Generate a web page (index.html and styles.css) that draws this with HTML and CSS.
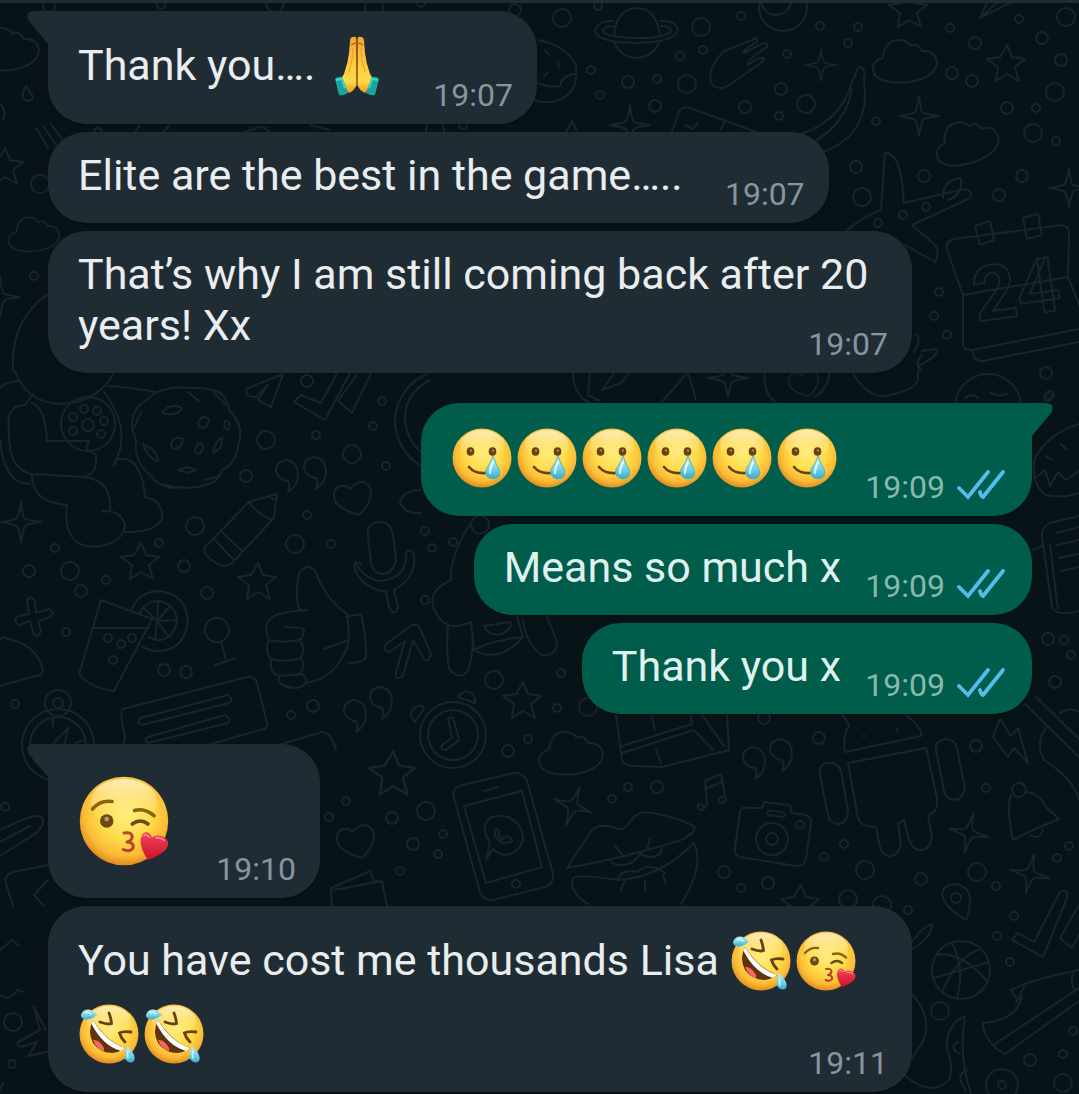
FILE: index.html
```
<!DOCTYPE html>
<html lang="en">
<head>
    <meta charset="UTF-8">
    <meta name="viewport" content="width=device-width, initial-scale=1.0">
    <title>Chat</title>
    <link rel="stylesheet" href="styles.css">
</head>
<body>
    <!-- Shared icons -->
    <svg class="sprite" aria-hidden="true">
        <defs>
            <radialGradient id="skin" cx="0.52" cy="0.42" r="0.6">
                <stop offset="0" stop-color="#ffee80"/>
                <stop offset="0.5" stop-color="#fedb48"/>
                <stop offset="0.78" stop-color="#fcbc36"/>
                <stop offset="1" stop-color="#dd841c"/>
            </radialGradient>
            <linearGradient id="shine" x1="0" y1="0" x2="0" y2="1">
                <stop offset="0" stop-color="#fdeecb" stop-opacity="0.9"/>
                <stop offset="1" stop-color="#ffe673" stop-opacity="0"/>
            </linearGradient>
            <linearGradient id="drop" x1="0" y1="0" x2="0" y2="1">
                <stop offset="0" stop-color="#b9eef2"/>
                <stop offset="0.6" stop-color="#6fd0e6"/>
                <stop offset="1" stop-color="#35a9cf"/>
            </linearGradient>
            <linearGradient id="love" x1="0" y1="0" x2="0" y2="1">
                <stop offset="0" stop-color="#f4465a"/>
                <stop offset="1" stop-color="#cb1029"/>
            </linearGradient>
            <linearGradient id="hand" x1="0" y1="0" x2="0" y2="1">
                <stop offset="0" stop-color="#f3a336"/>
                <stop offset="0.45" stop-color="#ffc93c"/>
                <stop offset="0.8" stop-color="#ffd84a"/>
                <stop offset="1" stop-color="#f0941f"/>
            </linearGradient>
        </defs>
        <symbol id="face" viewBox="0 0 60 60">
            <circle cx="30" cy="30" r="29.5" fill="url(#skin)"/>
            <ellipse cx="30" cy="17" rx="22" ry="15" fill="url(#shine)"/>
        </symbol>
        <symbol id="tear" viewBox="0 0 60 60">
            <use href="#face"/>
            <ellipse cx="18.500" cy="23.500" rx="3.800" ry="4.300" fill="#69400f"/>
            <ellipse cx="40.500" cy="23.500" rx="3.800" ry="4.300" fill="#69400f"/>
            <circle cx="19" cy="22.500" r="1.200" fill="#a9834f"/>
            <circle cx="41" cy="22.500" r="1.200" fill="#a9834f"/>
            <path d="M17 39Q23 46 34 45" fill="none" stroke="#69400f" stroke-width="2.600" stroke-linecap="round"/>
            <path d="M41 28Q44 36 47 41Q50 50 41 51Q32 50 34 41Q39 35 41 28Z" fill="url(#drop)" stroke="#4fa8b8" stroke-width="0.800"/>
            <path d="M41 34Q38 41 38 45" fill="none" stroke="#e8fbfd" stroke-width="2" stroke-linecap="round"/>
        </symbol>
        <symbol id="kiss" viewBox="0 0 60 60">
            <use href="#face"/>
            <path d="M9 22Q14 16 22 17" fill="none" stroke="#8a6310" stroke-width="2.400" stroke-linecap="round"/>
            <path d="M37 23Q44 21 50 26.500" fill="none" stroke="#8a6310" stroke-width="2.400" stroke-linecap="round"/>
            <circle cx="18.500" cy="30" r="4.500" fill="#6b4a13"/>
            <circle cx="18.500" cy="28.700" r="1.600" fill="#b39a74"/>
            <path d="M35.500 32Q41 28 46 32" fill="none" stroke="#6b4a13" stroke-width="2.400" stroke-linecap="round"/>
            <path d="M30 38Q35 37 35.500 40.500Q35 43.500 32 44Q37 44.500 36 48Q34 51 29.500 49" fill="none" stroke="#b5442a" stroke-width="2" stroke-linecap="round" stroke-linejoin="round"/>
            <path d="M48.500 41Q51 39 55 40Q62 43 58 49Q54 53 46 56Q41 49 41 43Q42 37 45 37.500Q48 38 48.500 41Z" fill="url(#love)"/>
            <path d="M43 40Q45 38 47 41M51 41.500Q54 40.500 57 43" fill="none" stroke="#ff9aa4" stroke-width="1"/>
        </symbol>
        <symbol id="rofl" viewBox="0 0 60 60">
            <use href="#face"/>
            <path d="M21 18Q29 21 32.500 19.500Q32 14 30 9" fill="none" stroke="#69400f" stroke-width="2.800" stroke-linecap="round"/>
            <path d="M52 28Q44 27 40.500 29Q42 34 46 38" fill="none" stroke="#69400f" stroke-width="2.800" stroke-linecap="round"/>
            <path d="M14 16Q8 28 14 39Q21 49 34 49Q41 48 46 44Q27 37 14 16Z" fill="#64310d"/>
            <path d="M14 16Q26 37 46 44L42 47Q24 42 12.500 20Z" fill="#fff"/>
            <path d="M14 36Q20 35 25 44L25 47.500Q17 44.500 14 36Z" fill="#ee6a63"/>
            <path d="M18 11Q12 4 6 6Q0 10 3 14Q9 18 18 11Z" fill="url(#drop)"/>
            <path d="M48 42Q45 50 46 55Q51 61 55 57Q58 51 48 42Z" fill="url(#drop)"/>
            <path d="M6 9Q9 7 12 10M49 47Q48 51 49 54" fill="none" stroke="#d8f6fa" stroke-width="1.400" stroke-linecap="round"/>
        </symbol>
        <symbol id="pray" viewBox="0 0 60 60">
            <path d="M29 1Q23 0 23 5L22 17Q21 27 17 38L12 46L22 57Q28 54 29.500 49Z" fill="url(#hand)"/>
            <path d="M31 1Q37 0 37 5L38 17Q39 27 43 38L48 46L38 57Q32 54 30.500 49Z" fill="url(#hand)"/>
            <path d="M30 2V50M24 9Q30 5 36 9" fill="none" stroke="#b36f12" stroke-width="1.300"/>
            <path d="M26 12Q26 24 22 36M34 12Q34 24 38 36" fill="none" stroke="#e9a127" stroke-width="1"/>
            <path d="M8 43Q10 40 15 41Q19 50 21 57Q16 60 12 59Z" fill="#16a79a"/>
            <path d="M52 43Q50 40 45 41Q41 50 39 57Q44 60 48 59Z" fill="#16a79a"/>
            <path d="M9 44L15 43L18 52M51 44L45 43L42 52" fill="none" stroke="#45d3c4" stroke-width="2"/>
        </symbol>
        <symbol id="ticks" viewBox="0 0 48 30">
            <path d="M2 18L11 27L31 2M23 22Q24 27 26 27L46 2" fill="none" stroke="#53bdeb" stroke-width="3.800" stroke-linecap="round" stroke-linejoin="miter"/>
        </symbol>
    </svg>

    <!-- Doodle wallpaper -->
    <svg class="wallpaper" viewBox="0 0 1079 1094" preserveAspectRatio="xMinYMin slice" aria-hidden="true">
        <defs>
            <marker id="ringS" markerUnits="userSpaceOnUse" markerWidth="12" markerHeight="12" refX="6" refY="6"><circle cx="6" cy="6" r="4"/></marker>
            <marker id="ringM" markerUnits="userSpaceOnUse" markerWidth="18" markerHeight="18" refX="9" refY="9"><circle cx="9" cy="9" r="6"/></marker>
            <marker id="ringL" markerUnits="userSpaceOnUse" markerWidth="24" markerHeight="24" refX="12" refY="12"><circle cx="12" cy="12" r="9"/></marker>
            <path id="star" d="M1 -19L6 -7L19 -5L9 3L13 17L1 10L-10 17L-8 3L-19 -5L-6 -7Z"/>
            <path id="sparkle" d="M0 -20Q2 -3 4 -3Q12 -1 20 0Q5 2 4 4Q2 8 0 20Q-2 6 -4 4Q-8 2 -20 0Q-5 -2 -4 -4Q-2 -7 0 -20Z"/>
            <path id="cloud" d="M-22 -4Q-20 -22 -6 -22Q2 -22 6 -16Q12 -20 17 -11Q30 -12 32 0Q31 12 16 17Q0 23 -20 19Q-33 15 -32 5Q-30 -3 -22 -4Z"/>
            <path id="heart" d="M-2 -9Q3 -17 12 -16Q20 -12 19 -3Q17 8 7 17Q-8 13 -16 5Q-21 -6 -14 -11Q-7 -14 -2 -9Z"/>
            <path id="quote" d="M1 5Q-8 4 -11 -4Q-12 -14 -1 -16Q10 -15 11 -2Q11 10 1 16Q4 10 1 5Z"/>
        </defs>

        <polyline class="small" points="598,6 741,16 703,50 680,56 591,70 657,79 600,95 787,54 820,26 858,27 848,43 779,116 950,28 1019,19 1036,108 1056,141 876,121 926,207 903,215 878,223 939,292 934,316 947,335 1050,395 84,409 97,411 73,417 104,421 73,431 101,434 316,435 382,401 373,426 386,466 331,544 307,515 55,548 106,580 159,543 66,632 15,704 291,715 425,531 561,673 557,708 528,739 628,787 612,799 346,801 329,817 443,834 438,854 400,871 986,788 844,844 824,857 741,888 996,886 1057,858 1069,846 908,910 1014,916 997,936 1010,962 1073,1031 1063,1054 1002,1085 34,276 98,132 161,5 421,3 463,125 5,807 108,638 121,644 132,638 113,660 432,548 453,542 425,600 1048,397 1064,640 1071,655 12,1064"/>
        <polyline class="medium" points="628,82 655,106 781,89 745,107 975,43 1042,38 1061,60 952,73 972,81 1007,108 856,167 924,176 1022,176 999,195 1046,373 88,425 307,381 246,476 29,571 81,591 184,566 207,593 164,670 186,672 313,706 508,751 657,787 392,818 413,844 764,718 819,738 976,746 724,872 921,879 1030,1060 49,6 515,10 1048,639 1055,682 768,883"/>
        <polyline class="large" points="562,18 701,27 687,84 806,104 1066,17 1055,92 1033,133 862,197 266,440 352,454 195,526 295,544 70,571 494,680 588,707 426,811 865,870 977,872 848,899 882,905 940,1011 1063,1083 40,184 275,3 374,8 435,130 13,1022 480,525"/>

        <use href="#star" x="1006" y="64"/>
        <use href="#star" x="908" y="10"/>
        <use href="#star" x="140" y="562"/>
        <use href="#star" x="257" y="582"/>
        <use href="#star" x="522" y="701"/>
        <use href="#star" transform="translate(392 774) scale(1.200)"/>
        <use href="#star" x="800" y="904"/>
        <use href="#star" x="4" y="167"/>
        <use href="#sparkle" transform="translate(821 65) scale(0.800)"/>
        <use href="#sparkle" x="919" y="116"/>
        <use href="#sparkle" x="1069" y="188"/>
        <use href="#sparkle" x="630" y="125"/>
        <use href="#sparkle" x="21" y="522"/>
        <use href="#sparkle" transform="translate(573 806) rotate(20)"/>
        <use href="#sparkle" transform="translate(969 833) rotate(12)"/>
        <use href="#sparkle" transform="translate(1030 874) rotate(12)"/>
        <use href="#sparkle" x="728" y="378"/>
        <use href="#sparkle" x="0" y="297"/>
        <use href="#cloud" x="905" y="62"/>
        <use href="#cloud" transform="translate(967 143) rotate(-12)"/>
        <use href="#cloud" x="571" y="754"/>
        <use href="#cloud" x="7" y="50"/>
        <use href="#cloud" transform="translate(34 235) scale(0.800)"/>
        <use href="#heart" x="352" y="498"/>
        <use href="#heart" x="355" y="841"/>
        <use href="#heart" transform="translate(803 383) scale(0.800)"/>
        <use href="#quote" x="287" y="476"/>
        <use href="#quote" x="315" y="473"/>
        <use href="#quote" x="355" y="716"/>
        <use href="#quote" x="381" y="703"/>
        <use href="#quote" x="754" y="763"/>
        <use href="#quote" x="781" y="755"/>

        <!-- planet, glove, donuts, banana -->
        <path d="M614 36Q616 9 637 8Q657 9 660 36M614 43Q622 58 637 58Q652 57 659 43M613 21Q597 21 595 31Q598 43 637 43Q676 42 678 30Q676 20 660 21M614 26Q603 26 603 32Q612 38 637 38Q665 38 671 31Q670 26 661 26"/>
        <path d="M757 38L724 51Q707 68 711 83Q719 94 735 81L762 62Q768 56 757 59L748 65Q746 60 767 47Q769 40 757 46L744 53Q741 51 757 42Z"/>
        <path d="M538 40Q565 45 576 65Q580 94 555 101Q543 104 535 100M575 74Q562 75 560 86Q550 88 538 83M545 50L549 55M558 62L559 68M548 72L544 76"/>
        <circle cx="783" cy="7" r="24"/>
        <circle cx="776" cy="0" r="15"/>
        <path d="M860 67Q866 68 864 82Q871 132 826 151Q800 152 790 146M858 68L852 82Q840 126 790 137M852 89Q846 123 815 141"/>
        <path d="M671 134L679 112Q682 106 690 108L756 132M685 125L693 129L698 122M725 120L721 129"/>
        <path d="M565 134L572 121L578 134M980 18L1000 0M980 18L988 0M980 18L1015 0"/>

        <!-- plane, calendar, cup, face -->
        <path d="M885 153Q900 152 903 192L904 203L964 189Q976 192 968 199L912 225L934 244Q941 252 935 262L905 245M885 153L881 210Q862 217 845 232M943 198Q942 180 961 178Q963 195 948 200"/>
        <path d="M963 295L947 250Q945 241 954 239L1062 225Q1069 226 1069 234L1068 277L963 295V343Q963 351 972 350L1079 329M973 351Q973 362 983 361L1079 342M1068 277L1085 320"/>
        <path d="M975 226L990 221L994 240L980 245ZM1023 218L1038 214L1042 235L1027 239Z"/>
        <text x="974" y="317" transform="rotate(-8 1010 300)">24</text>
        <path d="M852 372Q868 398 885 396Q914 391 918 380Q917 373 920 365Q940 355 936 349L922 351M916 334Q922 340 914 352M922 370Q913 366 922 355"/>
        <circle cx="988" cy="407" r="33"/>
        <path d="M965 398Q972 392 978 398M990 393Q999 397 1007 394M971 408Q986 424 1002 405"/>
        <path d="M573 373Q573 395 590 403M590 373L588 395L600 401M615 372L602 390L621 383L630 372M660 404L688 372L696 400M765 372Q762 394 778 404M830 372Q827 390 815 397"/>
        <path d="M1079 424Q1048 434 1035 458Q1030 484 1046 495Q1063 499 1079 493M1036 477L1045 470L1050 486L1058 472L1066 480L1079 471M1046 456L1052 460M1061 444L1066 449"/>

        <!-- baby with rattle, cookie -->
        <path d="M15 371Q26 403 62 404Q98 402 114 373M20 381Q4 382 0 388M33 394L25 405Q5 405 9 431Q8 470 32 474L83 477Q98 474 96 455L86 448L89 441L47 441Q45 405 31 403"/>
        <path d="M0 440Q4 484 30 484M32 474Q32 503 67 505M67 504Q62 546 94 547Q124 544 125 524Q120 510 102 511M83 477Q112 479 110 511M104 392Q133 430 114 465M108 386Q135 388 155 392M115 460Q141 452 145 497Q164 501 162 519Q154 533 125 532"/>
        <circle cx="88" cy="424" r="27"/>
        <path d="M155 393Q170 386 190 388Q205 387 221 393Q229 402 229 410Q242 423 240 438L236 455Q231 466 222 470Q217 484 205 485Q193 489 180 487Q168 490 157 482L143 468Q134 456 136 441L132 428Q131 410 144 402Z"/>
        <path d="M162 413Q169 402 182 408Q178 417 162 413ZM198 424Q201 413 209 419Q208 430 200 427ZM171 445Q173 435 183 439Q181 451 172 448ZM195 450Q199 438 203 446Q202 456 196 453ZM178 470L187 467L196 470L187 473ZM143 444Q158 450 158 461Q148 459 143 444ZM213 453Q215 440 222 438Q223 449 213 453ZM225 421Q232 421 229 430Q222 428 225 421ZM204 480L220 476M162 484L178 488M188 392L199 401M213 392L226 405M141 412L134 428"/>

        <!-- checks, watch, pencil, mic -->
        <path d="M283 374L246 389Q246 398 256 397L268 385L258 400L271 407L283 374M337 373L321 403L301 395L294 402L325 420L350 373M358 373L338 401L352 413L371 373"/>
        <path d="M430 372Q394 389 395 425Q399 453 421 466M430 380Q404 394 405 420Q407 440 421 452M421 490Q405 490 400 501Q402 514 421 513"/>
        <path d="M249 502L277 494L274 518L233 562Q226 569 216 563Q202 555 205 547ZM249 502Q258 514 270 519M221 531L242 551M214 539L233 559M268 496Q272 500 277 499"/>
        <path d="M368 537Q366 523 379 522Q390 521 393 534L396 560Q393 573 384 574Q373 574 371 563ZM355 562Q364 580 382 581Q408 577 406 553Q410 547 414 555Q417 577 394 590L398 608Q394 617 389 607L386 592Q359 587 354 566Q356 558 361 565"/>

        <!-- drink, tee, plus, thumb, arrow -->
        <path d="M101 600L152 619L114 691Q90 688 79 674L101 600M93 628H149M132 609Q138 592 159 591Q186 594 188 621Q184 651 158 651Q148 651 142 646M140 613Q145 601 160 601Q176 605 177 621Q173 641 157 640L148 637M157 621L158 602M157 621L169 607M157 621L177 620M157 621L168 636M157 621L155 640M157 621L144 608"/>
        <circle cx="217" cy="630" r="12"/>
        <path d="M221 642L226 660M215 665L236 658M27 600Q32 594 35 602L36 613L49 609Q56 613 50 617L38 621L41 631Q37 640 33 632L30 621L19 625Q12 621 18 616L29 614Z"/>
        <path d="M307 610Q292 615 299 573Q310 560 317 575Q325 598 347 614Q351 642 346 650Q335 678 306 683Q298 692 283 685Q278 683 279 676Q269 672 271 660Q264 649 269 640Q263 625 270 619Q276 612 307 610ZM269 640Q285 644 301 639Q307 629 301 628L285 627M271 659Q286 663 301 658Q306 648 300 641M279 676L300 674Q306 665 301 659M306 683Q307 675 300 674M346 617L361 614Q367 640 366 658Q361 663 348 663M324 649L347 641"/>
        <path d="M412 625Q419 624 421 631L431 654Q428 664 424 659L413 640L403 676Q395 682 396 672L405 641L390 652Q381 650 386 644Z"/>
        <path d="M0 640Q2 635 8 639Q37 645 43 670Q43 675 35 676L0 686"/>

        <!-- compass, note, dog -->
        <circle cx="58" cy="703" r="13"/>
        <circle cx="58" cy="703" r="5"/>
        <circle cx="58" cy="745" r="36"/>
        <circle cx="58" cy="745" r="28"/>
        <path d="M53 719V726M52 745L68 728L63 752ZM76 743L84 740M122 750L125 738Q119 710 123 709L247 677Q255 676 257 683L267 723Q268 729 260 730L190 750M141 718L228 695Q234 699 229 703L142 725Q135 722 141 718M148 737L225 715Q232 719 228 723L148 743Q143 740 148 737M275 746L322 732Q331 731 336 750"/>
        <path d="M470 524Q450 555 451 580Q427 591 434 609Q440 622 448 625Q446 656 449 668Q458 681 467 672Q476 650 471 625M448 625Q457 628 471 622L474 650Q499 664 523 637L517 616M484 626Q490 637 502 634Q514 627 510 622ZM523 620Q526 645 542 655Q557 657 557 642L546 614M474 650Q492 640 523 637"/>

        <!-- clock, phone, lips -->
        <circle cx="453" cy="735" r="33"/>
        <circle cx="453" cy="735" r="25"/>
        <path d="M448 719Q453 715 454 721L459 740L446 750Q440 750 442 745L452 738ZM415 722Q407 714 415 707Q424 704 424 709ZM458 697Q464 688 473 694Q476 700 475 703Z"/>
        <path d="M454 798Q451 788 462 785L514 773Q523 772 527 781L553 874Q554 884 545 887L493 900Q483 901 480 892ZM464 806L522 791L542 867L486 883ZM484 791L498 787"/>
        <circle cx="516" cy="884" r="4"/>
        <path d="M493 849L486 860L490 842Q479 827 490 818Q506 811 519 825Q530 845 510 854Q502 857 493 849ZM496 829Q492 838 504 843Q513 843 512 839L507 836L502 839L498 834Q501 831 496 829Z"/>
        <path d="M567 868L592 830Q600 822 619 829Q623 831 630 822Q638 808 658 814Q691 822 695 828Q694 834 681 840Q625 858 567 868ZM611 861Q617 869 633 862Q643 852 640 854Q654 860 661 853L662 848M615 846L622 854M650 839L647 850M588 904Q568 891 573 878Q580 874 617 880Q660 878 694 843Q705 866 681 904M618 878Q622 869 637 872Q650 861 665 873M625 880L621 890M645 881V891M663 875L666 883"/>
        <path d="M332 906L331 888Q352 879 370 871L374 881L382 882L387 906M334 890L382 881M0 830L22 820Q42 812 43 820Q44 830 25 840L0 856M0 842L30 826M13 906L5 880Q7 873 14 872L48 865M44 906L34 895L48 880"/>
        <path d="M616 715L622 760Q624 766 634 766L662 767L729 750L727 714M622 746L692 724L691 716M622 753L694 730L713 750M652 716L655 730M656 750L661 763M702 715L724 746"/>

        <!-- music, camera, robot -->
        <path d="M705 807Q697 800 698 808Q702 814 707 804L705 781L721 774L725 796Q716 798 720 803Q728 803 725 796M705 789L722 782"/>
        <path d="M740 812Q741 806 748 808L762 808L764 802L790 805L792 813L806 815Q811 817 811 822L806 859Q804 867 796 866L740 857Q734 855 735 848ZM767 812Q768 809 784 813Q787 816 783 817L768 815Z"/>
        <circle cx="772" cy="839" r="16"/>
        <circle cx="772" cy="839" r="6"/>
        <circle cx="800" cy="825" r="4"/>
        <path d="M842 714L849 725Q842 738 845 752L921 736Q924 730 905 714M848 763L926 748L937 798Q939 812 928 815L932 838Q929 851 920 850Q912 850 909 839L904 820L898 823L901 845Q898 857 889 856Q882 855 880 847L876 827L867 826Q860 824 858 818ZM820 775Q818 765 827 763Q837 761 841 771L848 811Q847 823 838 824Q829 823 828 815ZM936 750Q935 741 945 739Q955 739 957 748L965 788Q963 799 955 800Q946 799 944 791ZM864 735V737M897 729V731"/>

        <!-- bolt, guitar, bell, pin -->
        <path d="M1000 719L993 737L1008 757L1014 748L1028 763L1018 728L1011 736Z"/>
        <path d="M1025 704L1079 757M1036 697L1079 739M1046 728Q1035 743 1044 760Q1073 778 1079 800M1060 713Q1071 706 1079 712"/>
        <circle cx="1019" cy="790" r="7"/>
        <path d="M1011 795Q1006 808 1013 840Q1035 828 1059 819L1047 808Q1038 792 1025 792M1030 835Q1039 841 1043 830"/>
        <path d="M966 920Q944 907 942 894Q943 885 955 884Q968 886 970 897Q970 910 966 920Z"/>
        <circle cx="956" cy="898" r="5"/>

        <!-- ball, shoe, snake, checks -->
        <circle cx="961" cy="970" r="29"/>
        <path d="M937 955Q960 950 987 981M942 992Q957 957 978 950M952 943Q965 967 957 998M934 978L989 962"/>
        <path d="M1034 942L1060 892Q1069 888 1067 898L1043 957L1012 940L1018 933ZM1079 905L1060 938L1072 948L1079 935"/>
        <path d="M1011 990Q1030 980 1079 970M1011 990Q1019 1005 1022 996Q1017 1020 983 1023Q982 1036 998 1050L1005 1054L1079 1001M995 1044L1079 988M1016 1002L1024 987M1073 972Q1069 990 1079 990"/>
        <path d="M912 942Q923 926 932 924Q931 939 912 949M912 994Q935 1020 921 1045Q908 1060 905 1076Q935 1099 950 1078Q953 1064 947 1050Q945 1025 965 1016Q958 1055 971 1094M958 1042Q948 1048 960 1054M967 1070Q954 1075 966 1090"/>
        <circle cx="1002" cy="1085" r="16"/>
        <path d="M34 1007L46 1030M34 1007L40 1030L18 1042Q16 1048 25 1046L37 1042L28 1056L47 1052M0 995Q10 1002 17 990L24 992M0 950L12 940L18 945M0 1090L3 1083"/>
        <path d="M1079 516L1050 523Q1041 528 1042 537L1052 607Q1056 617 1079 611M1050 545L1058 609M1056 533L1079 527M1057 545L1079 540M1059 558L1079 554M1061 571L1079 567M1032 550L1042 546"/>
        <path d="M36 128L48 148M43 126L57 146M51 124L64 142M140 125L135 132M170 125L163 132M245 132L262 126L270 132M310 125L330 130"/>
        <path d="M48 294Q10 320 13 371M26 86Q19 98 27 101Q35 100 32 95ZM0 104Q7 111 3 119"/>
    </svg>

    <div class="topbar"></div>

    <main class="chat">
        <section class="group incoming">
            <article class="bubble tail">
                <p class="text with-emoji">Thank you…. <svg class="emoji" role="img" aria-label="folded hands"><use href="#pray"/></svg></p>
                <div class="meta"><time>19:07</time></div>
            </article>
            <article class="bubble">
                <p class="text">Elite are the best in the game…..</p>
                <div class="meta"><time>19:07</time></div>
            </article>
            <article class="bubble">
                <p class="text long">That’s why I am still coming back after 20 years! Xx</p>
                <div class="meta"><time>19:07</time></div>
            </article>
        </section>

        <section class="group outgoing">
            <article class="bubble tail">
                <p class="text with-emoji"><svg class="emoji" role="img" aria-label="smiling face with tear"><use href="#tear"/></svg><svg class="emoji" role="img" aria-label="smiling face with tear"><use href="#tear"/></svg><svg class="emoji" role="img" aria-label="smiling face with tear"><use href="#tear"/></svg><svg class="emoji" role="img" aria-label="smiling face with tear"><use href="#tear"/></svg><svg class="emoji" role="img" aria-label="smiling face with tear"><use href="#tear"/></svg><svg class="emoji" role="img" aria-label="smiling face with tear"><use href="#tear"/></svg></p>
                <div class="meta"><time>19:09</time><svg class="ticks" role="img" aria-label="Read"><use href="#ticks"/></svg></div>
            </article>
            <article class="bubble">
                <p class="text">Means so much x</p>
                <div class="meta"><time>19:09</time><svg class="ticks" role="img" aria-label="Read"><use href="#ticks"/></svg></div>
            </article>
            <article class="bubble">
                <p class="text">Thank you x</p>
                <div class="meta"><time>19:09</time><svg class="ticks" role="img" aria-label="Read"><use href="#ticks"/></svg></div>
            </article>
        </section>

        <section class="group incoming">
            <article class="bubble tail">
                <p class="text"><svg class="emoji big" role="img" aria-label="face blowing a kiss"><use href="#kiss"/></svg></p>
                <div class="meta"><time>19:10</time></div>
            </article>
            <article class="bubble">
                <p class="text with-emoji long">You have cost me thousands Lisa <svg class="emoji" role="img" aria-label="rolling on the floor laughing"><use href="#rofl"/></svg><svg class="emoji" role="img" aria-label="face blowing a kiss"><use href="#kiss"/></svg><svg class="emoji" role="img" aria-label="rolling on the floor laughing"><use href="#rofl"/></svg><svg class="emoji" role="img" aria-label="rolling on the floor laughing"><use href="#rofl"/></svg></p>
                <div class="meta"><time>19:11</time></div>
            </article>
        </section>
    </main>
</body>
</html>
```
FILE: styles.css
```
* {
    box-sizing: border-box;
}
body {
    position: relative;
    margin: 0;
    min-height: 100vh;
    background-color: #081318;
    font-family: Roboto, sans-serif;
    color: #e9edef;
}
.sprite {
    position: absolute;
    width: 0;
    height: 0;
}
.wallpaper {
    position: absolute;
    inset: 0;
    width: 100%;
    height: 100%;
    fill: none;
    stroke: #19252b;
    stroke-width: 2;
    stroke-linecap: round;
    stroke-linejoin: round;
}
.wallpaper polyline {
    stroke: none;
}
.wallpaper text {
    font-size: 76px;
    font-weight: 700;
}
.small {
    marker: url(#ringS);
}
.medium {
    marker: url(#ringM);
}
.large {
    marker: url(#ringL);
}
.topbar {
    position: relative;
    height: 3px;
    background-color: #202c33;
}
.chat {
    position: relative;
    display: flex;
    flex-direction: column;
    gap: 30px;
    padding: 8px 47px 2px 48px;
}
.group {
    display: flex;
    flex-direction: column;
    align-items: flex-start;
    gap: 8px;
}
.outgoing {
    align-items: flex-end;
}
/* text and time share one grid cell, the time sits in its bottom corner */
.bubble {
    position: relative;
    display: grid;
    max-width: calc(100% - 120px);
    padding: 18px 24px 10px 30px;
    border-radius: 38px;
    background-color: #202c33;
    box-shadow: 0 1px 2px rgba(0, 0, 0, 0.3);
}
.outgoing .bubble {
    padding-right: 27px;
    background-color: #005c4b;
    color: #e0f2ee;
}
.text {
    grid-area: 1 / 1;
    margin: 0;
    padding: 0 122px 12px 0;
    font-size: 43px;
    line-height: 51px;
}
.outgoing .text {
    padding-right: 164px;
}
.text.long {
    padding-right: 0;
}
.with-emoji {
    line-height: 73px;
}
.meta {
    grid-area: 1 / 1;
    place-self: end;
    display: flex;
    align-items: center;
    gap: 12px;
    font-size: 32px;
    line-height: 38px;
    color: #8696a0;
}
.outgoing .meta {
    color: #88b9ad;
}
.ticks {
    width: 48px;
    height: 30px;
    margin-bottom: 4px;
}
.emoji {
    width: 60px;
    height: 60px;
    margin: 0 4px 0 1px;
    vertical-align: -16px;
}
.emoji.big {
    display: block;
    width: 90px;
    height: 90px;
    margin: 14px 5px 10px 1px;
}
.tail::before {
    content: "";
    position: absolute;
    top: 0;
    width: 22px;
    height: 34px;
    background-color: inherit;
}
.incoming .tail {
    border-top-left-radius: 0;
}
.incoming .tail::before {
    left: -21px;
    clip-path: path("M22 0H7Q-3 1 2 10L21 33H22Z");
}
.outgoing .tail {
    border-top-right-radius: 0;
}
.outgoing .tail::before {
    right: -21px;
    clip-path: path("M0 0H15Q25 1 20 10L1 33H0Z");
}
```
